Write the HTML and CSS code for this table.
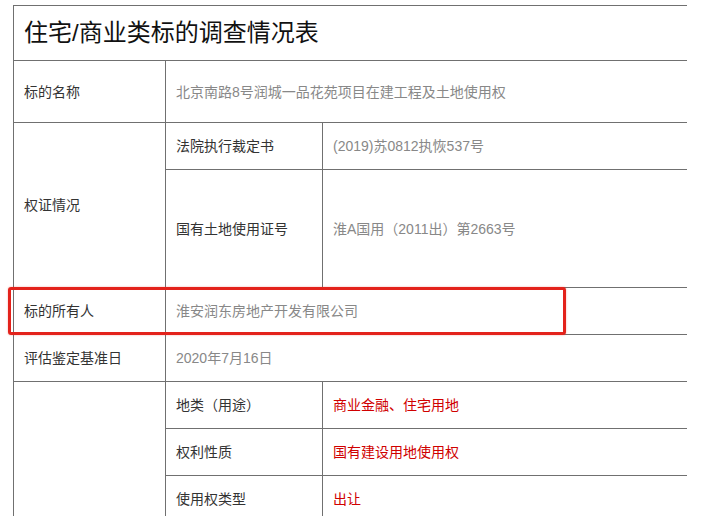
FILE: index.html
```html
<!DOCTYPE html>
<html lang="zh-CN">
<head>
    <meta charset="UTF-8">
    <title>住宅/商业类标的调查情况表</title>
    <link rel="stylesheet" href="styles.css">
</head>
<body>
    <div class="page">
        <!-- Survey table -->
        <table class="survey">
            <colgroup>
                <col class="col-label">
                <col class="col-sub">
                <col class="col-value">
            </colgroup>
            <tr class="row-title">
                <td colspan="3" class="title">住宅/商业类标的调查情况表</td>
            </tr>
            <tr class="row-tall">
                <td>标的名称</td>
                <td colspan="2" class="value">北京南路8号润城一品花苑项目在建工程及土地使用权</td>
            </tr>
            <tr>
                <td rowspan="2">权证情况</td>
                <td>法院执行裁定书</td>
                <td class="value">(2019)苏0812执恢537号</td>
            </tr>
            <tr class="row-cert">
                <td>国有土地使用证号</td>
                <td class="value">淮A国用（2011出）第2663号</td>
            </tr>
            <tr>
                <td>标的所有人</td>
                <td colspan="2" class="value">淮安润东房地产开发有限公司</td>
            </tr>
            <tr>
                <td>评估鉴定基准日</td>
                <td colspan="2" class="value">2020年7月16日</td>
            </tr>
            <tr>
                <td rowspan="6">土地情况</td>
                <td>地类（用途）</td>
                <td class="value red">商业金融、住宅用地</td>
            </tr>
            <tr>
                <td>权利性质</td>
                <td class="value red">国有建设用地使用权</td>
            </tr>
            <tr>
                <td>使用权类型</td>
                <td class="value red">出让</td>
            </tr>
            <tr>
                <td>终止日期</td>
                <td class="value red">2051年12月</td>
            </tr>
            <tr>
                <td>土地面积</td>
                <td class="value red">11738.9平方米</td>
            </tr>
            <tr>
                <td>容积率</td>
                <td class="value red">2.5</td>
            </tr>
        </table>

        <!-- Highlight around the owner row -->
        <div class="highlight"></div>
    </div>
</body>
</html>
```

FILE: styles.css
```css
/* Reset */
* {
    margin: 0;
    padding: 0;
    box-sizing: border-box;
}

body {
    font-family: "Liberation Sans", "Noto Sans CJK SC", sans-serif;
    background-color: #fff;
    color: #333;
}

.page {
    position: relative;
    padding: 5px 0 0 13px;
}

/* Table */
.survey {
    border-collapse: collapse;
    table-layout: fixed;
    width: 674px;
    font-size: 14px;
    line-height: 20px;
}

.col-label {
    width: 152px;
}

.col-sub {
    width: 157px;
}

.survey td {
    border: 1px solid #707070;
    padding: 0 10px;
    height: 47px;
    vertical-align: middle;
    white-space: nowrap;
}

.survey td:last-child {
    border-right: none;
}

.survey td[rowspan] {
    border-right: 1px solid #707070;
}

.row-title td {
    height: 55px;
}

.row-tall td {
    height: 62px;
}

.row-cert td {
    height: 118px;
}

.title {
    font-size: 24px;
    color: #111;
    padding-top: 2px;
}

.value {
    color: #888;
    padding-left: 11px;
}

.value.red {
    color: #d00000;
}

/* Red box drawn over the owner row */
.highlight {
    position: absolute;
    left: 8px;
    top: 287px;
    width: 558px;
    height: 48px;
    border: 3px solid #e3221b;
    border-radius: 3px;
    box-shadow: 0 0 2px rgba(227, 34, 27, 0.4);
}
```
